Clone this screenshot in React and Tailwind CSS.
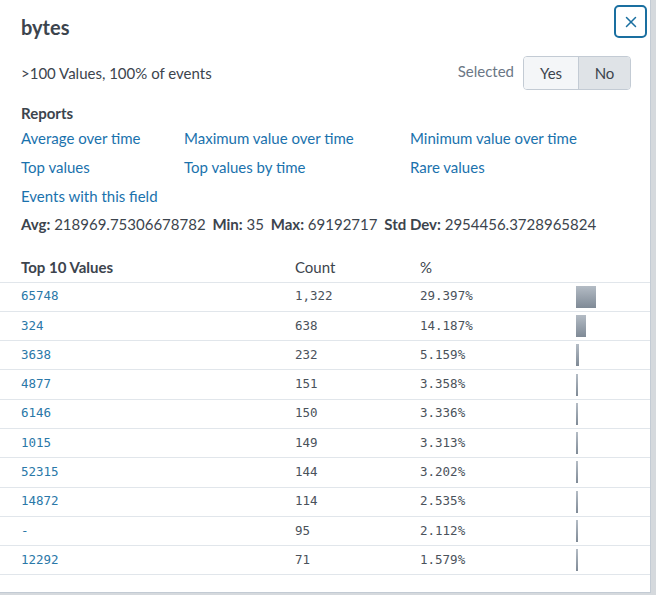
import { X } from "lucide-react";

const rows = [
  { value: "65748", count: "1,322", pct: "29.397%", w: 20 },
  { value: "324", count: "638", pct: "14.187%", w: 10 },
  { value: "3638", count: "232", pct: "5.159%", w: 3 },
  { value: "4877", count: "151", pct: "3.358%", w: 2 },
  { value: "6146", count: "150", pct: "3.336%", w: 2 },
  { value: "1015", count: "149", pct: "3.313%", w: 2 },
  { value: "52315", count: "144", pct: "3.202%", w: 2 },
  { value: "14872", count: "114", pct: "2.535%", w: 2 },
  { value: "-", count: "95", pct: "2.112%", w: 2 },
  { value: "12292", count: "71", pct: "1.579%", w: 2 },
];

const mono = { fontFamily: "'DejaVu Sans Mono', monospace" };

export default function App() {
  return (
    <div className="w-[656px] h-[595px] bg-[#d5d9dd] font-['Lato',sans-serif] text-[#3c444d]">
      <div className="w-[651px] h-[593px] bg-white border-r border-b border-[#c3cbd4] overflow-hidden">
        <div className="flex items-start justify-between pl-[21px] pr-[3px] pt-[5px]">
          <h1 className="text-[20px] font-bold mt-[9px] leading-[26px]">bytes</h1>
          <button className="w-[33px] h-[33px] border-2 border-[#1a6fa0] rounded-[5px] flex items-center justify-center text-[#1a6fa0]">
            <X size={18} strokeWidth={2} />
          </button>
        </div>

        <div className="flex items-center justify-between pl-[21px] pr-[19px] mt-[16px]">
          <div className="text-[15px]">&gt;100 Values, 100% of events</div>
          <div className="flex items-center">
            <span className="text-[15px] text-[#6b7785] mr-[9px] -mt-[3px]">Selected</span>
            <div className="flex h-[34px] border border-[#c3cbd4] rounded-[4px] overflow-hidden text-[15px]">
              <div className="w-[55px] flex items-center justify-center bg-[#f4f6f8] border-r border-[#c3cbd4]">Yes</div>
              <div className="w-[51px] flex items-center justify-center bg-[#dfe3e7]">No</div>
            </div>
          </div>
        </div>

        <div className="pl-[21px] mt-[13px]">
          <div className="text-[15px] font-bold leading-[20px]">Reports</div>
          <div className="grid grid-cols-[163px_226px_1fr] text-[15px] text-[#1a72ad] leading-[20px] gap-y-[9px] mt-[5px]">
            <span>Average over time</span>
            <span>Maximum value over time</span>
            <span>Minimum value over time</span>
            <span>Top values</span>
            <span>Top values by time</span>
            <span>Rare values</span>
            <span>Events with this field</span>
          </div>
          <div className="text-[15px] leading-[20px] mt-[8px]">
            <b>Avg:</b> 218969.75306678782 <b className="ml-[3px]">Min:</b> 35 <b className="ml-[3px]">Max:</b> 69192717{" "}
            <b className="ml-[3px]">Std Dev:</b> 2954456.3728965824
          </div>
        </div>

        <table className="w-full mt-[22px] border-collapse table-fixed">
          <thead>
            <tr className="h-[26px] border-b border-[#e1e6eb] text-[15px] text-left">
              <th className="pl-[21px] w-[295px] font-bold align-top">Top 10 Values</th>
              <th className="w-[125px] font-normal align-top">Count</th>
              <th className="w-[156px] font-normal align-top">%</th>
              <th></th>
            </tr>
          </thead>
          <tbody>
            {rows.map((r) => (
              <tr key={r.value} className="h-[29.3px] border-b border-[#e1e6eb] text-[12.5px]" style={mono}>
                <td className="pl-[21px] text-[#2a78a8]">{r.value}</td>
                <td className="text-[#4a525b]">{r.count}</td>
                <td className="text-[#4a525b]">{r.pct}</td>
                <td>
                  <div
                    className="h-[22px] bg-gradient-to-b from-[#b4bcc5] to-[#7f8a96]"
                    style={{ width: r.w }}
                  />
                </td>
              </tr>
            ))}
          </tbody>
        </table>
      </div>
    </div>
  );
}
